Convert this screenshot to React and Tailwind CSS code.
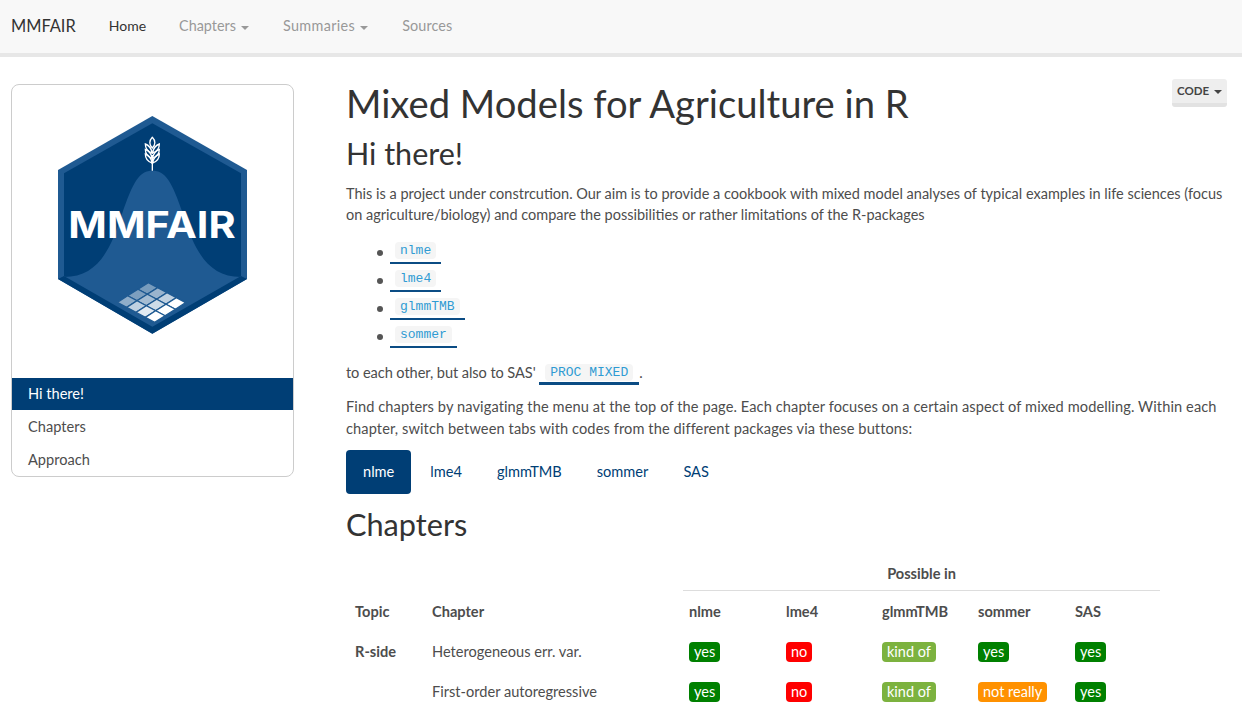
import React from 'react';

const Caret = () => (
  <span className="inline-block ml-[5px] align-middle w-0 h-0 border-x-4 border-x-transparent border-t-4 border-t-current" />
);

const shades = [
  [0.4, 0.42, 0.5],
  [0.55, 0.6, 0.72],
  [0.72, 0.78, 0.88],
  [1, 1, 1],
];

const WheatLogo = () => {
  // 4x3 grid on the isometric plane at the bottom of the hexagon
  const cells = [];
  for (let u = 0; u < 4; u++) {
    for (let v = 0; v < 3; v++) {
      const p = (a, b) => `${325 + (a * 112) / 4 - (b * 93) / 3},${533 + (a * 60) / 4 + (b * 59) / 3}`;
      cells.push(
        <polygon
          key={`${u}-${v}`}
          points={`${p(u, v)} ${p(u + 1, v)} ${p(u + 1, v + 1)} ${p(u, v + 1)}`}
          fill="#fff"
          fillOpacity={shades[u][v]}
          stroke="#1f5a92"
          strokeWidth="4"
        />
      );
    }
  }
  const leaf = (y, side) => (
    <path
      key={`${y}-${side}`}
      d={`M337 ${y + 24} C${337 + side * 4} ${y + 8} ${337 + side * 12} ${y} ${337 + side * 21} ${y - 3} C${337 + side * 21} ${y + 10} ${337 + side * 14} ${y + 20} 337 ${y + 24}Z`}
      fill="none"
      stroke="#fff"
      strokeWidth="4"
    />
  );
  return (
    <svg width="225" height="240" viewBox="0 0 675 720">
      <polygon points="337,33 621,195 621,522 337,686 54,522 54,195" fill="#1f5a92" />
      <polygon points="337,55 603,205 603,513 337,665 72,513 72,205" fill="#003e75" />
      <path
        d="M72 516 C170 516 210 440 245 330 C280 225 300 197 337 197 C375 197 395 225 430 330 C465 440 505 516 603 516 L337 668 Z"
        fill="#1f5a92"
      />
      <polygon points="54,522 72,513 337,665 603,513 621,522 337,686" fill="#003e75" />
      <path d="M337 150 V197" stroke="#fff" strokeWidth="4" />
      <path d="M337 97 C327 107 327 120 337 129 C347 120 347 107 337 97Z" fill="none" stroke="#fff" strokeWidth="4" />
      {[120, 136, 150].flatMap((y) => [leaf(y, -1), leaf(y, 1)])}
      <text
        x="85"
        y="400"
        fill="#fff"
        fontFamily="Inter, sans-serif"
        fontWeight="700"
        fontSize="110"
        textLength="502"
        lengthAdjust="spacingAndGlyphs"
      >
        MMFAIR
      </text>
      {cells}
    </svg>
  );
};

const CodeLink = ({ name, extra = 'px-[5px] border-b-2 pb-[3px]' }) => (
  <a className={`inline-block border-[#0b4c84] leading-[17px] tracking-normal ${extra}`}>
    <code className="bg-[#f5f5f5] rounded px-[5px] py-[1px] text-[#2f9bd3] text-[13px] font-['Liberation_Mono',monospace]">
      {name}
    </code>
  </a>
);

const PackageItem = ({ name }) => (
  <li className="h-[28px] flex items-start gap-[7px]">
    <span className="mt-[10px] w-[6px] h-[6px] rounded-full bg-[#555]" />
    <CodeLink name={name} />
  </li>
);

const badgeColors = {
  yes: 'bg-[#008000]',
  no: 'bg-[#ff0000]',
  'kind of': 'bg-[#7cb23f]',
  'not really': 'bg-[#ff9100]',
};

const Badge = ({ label }) => (
  <span className={`inline-block rounded-[4px] px-[5px] h-[20px] leading-[20px] text-white text-[14.5px] ${badgeColors[label]}`}>
    {label}
  </span>
);

const rows = [
  { topic: 'R-side', chapter: 'Heterogeneous err. var.', values: ['yes', 'no', 'kind of', 'yes', 'yes'] },
  { topic: '', chapter: 'First-order autoregressive', values: ['yes', 'no', 'kind of', 'not really', 'yes'] },
];

const App = () => {
  return (
    <div className="h-[715px] overflow-hidden bg-white text-[#4d4d4d] text-[14.6px] leading-[21.4px] font-['Lato',sans-serif]">
      <nav className="h-[57px] pb-[1px] bg-[#f8f8f8] border-b-4 border-[#e7e7e7] flex items-center text-[14.4px] text-[#999]">
        <a className="ml-[11px] text-[16.4px] text-[#333]">MMFAIR</a>
        <a className="ml-[33px] text-[14px] text-[#333]">Home</a>
        <a className="ml-[33px]">Chapters<Caret /></a>
        <a className="ml-[34px] tracking-[0.35px]">Summaries<Caret /></a>
        <a className="ml-[34px] tracking-[0.1px]">Sources</a>
      </nav>

      <div className="flex items-start">
        <aside className="ml-[11px] mt-[27px] w-[283px] h-[393px] border border-[#ccc] rounded-lg flex flex-col">
          <div className="h-[293px] pl-[28px] pt-[20px]">
            <WheatLogo />
          </div>
          <a className="h-[32px] bg-[#003e75] text-white pl-[16px] leading-[32px]">Hi there!</a>
          <a className="h-[33px] pl-[16px] leading-[33px]">Chapters</a>
          <a className="h-[33px] pl-[16px] leading-[33px]">Approach</a>
        </aside>

        <main className="ml-[52px] w-[881px]">
          <div className="flex justify-between items-start">
            <h1 className="mt-[23px] text-[38.2px] leading-[46px] text-[#333]">Mixed Models for Agriculture in R</h1>
            <button className="mt-[22px] h-[28px] w-[55px] rounded-[3px] bg-[#eee] border-b-4 border-[#e2e2e2] text-[11.5px] font-bold text-[#444] leading-[24px]">
              CODE<Caret />
            </button>
          </div>
          <h2 className="mt-[7px] text-[30.5px] leading-[40px] text-[#333]">Hi there!</h2>
          <p className="mt-[10px] text-[14.5px]">
            This is a project under constrcution. Our aim is to provide a cookbook with mixed model analyses of typical examples in life sciences (focus on agriculture/biology) and compare the possibilities or rather limitations of the R-packages
          </p>
          <ul className="mt-[14px] pl-[31px]">
            <PackageItem name="nlme" />
            <PackageItem name="lme4" />
            <PackageItem name="glmmTMB" />
            <PackageItem name="sommer" />
          </ul>
          <p className="mt-[10px] tracking-[-0.08px]">
            to each other, but also to SAS' <CodeLink name="PROC MIXED" extra="px-[6px] border-b-[3px] pb-[1px] align-[2px]" />.
          </p>
          <p className="mt-[11px] tracking-[0.1px] leading-[22.5px]">
            Find chapters by navigating the menu at the top of the page. Each chapter focuses on a certain aspect of mixed modelling. Within each chapter, switch between tabs with codes from the different packages via these buttons:
          </p>
          <div className="mt-[9px] flex text-[#003e75]">
            <a className="h-[44px] leading-[44px] px-[17px] rounded bg-[#003e75] text-white">nlme</a>
            <a className="h-[44px] leading-[44px] pl-[19px] pr-[17.5px]">lme4</a>
            <a className="h-[44px] leading-[44px] px-[17.5px]">glmmTMB</a>
            <a className="h-[44px] leading-[44px] px-[17.5px]">sommer</a>
            <a className="h-[44px] leading-[44px] px-[17.5px]">SAS</a>
          </div>
          <h2 className="mt-[11px] text-[30.7px] leading-[40px] text-[#333]">Chapters</h2>

          <table className="mt-[12px] ml-[1px] w-[813px] table-fixed border-collapse">
            <colgroup>
              <col className="w-[77px]" />
              <col className="w-[259px]" />
              <col className="w-[97px]" />
              <col className="w-[96px]" />
              <col className="w-[96px]" />
              <col className="w-[97px]" />
              <col className="w-[91px]" />
            </colgroup>
            <thead>
              <tr className="h-[34px]">
                <th colSpan="2" />
                <th colSpan="5" className="font-bold text-center border-b border-[#ddd]">Possible in</th>
              </tr>
              <tr className="h-[41px] font-bold text-left">
                <th className="pl-[8px]">Topic</th>
                <th className="pl-[8px]">Chapter</th>
                {['nlme', 'lme4', 'glmmTMB', 'sommer', 'SAS'].map((pkg) => (
                  <th key={pkg} className="pl-[6px]">{pkg}</th>
                ))}
              </tr>
            </thead>
            <tbody>
              {rows.map((row) => (
                <tr key={row.chapter} className="h-[40px]">
                  <td className="pl-[8px] font-bold">{row.topic}</td>
                  <td className="pl-[8px]">{row.chapter}</td>
                  {row.values.map((value, i) => (
                    <td key={i} className="pl-[6px]"><Badge label={value} /></td>
                  ))}
                </tr>
              ))}
            </tbody>
          </table>
        </main>
      </div>
    </div>
  );
};

export default App;
